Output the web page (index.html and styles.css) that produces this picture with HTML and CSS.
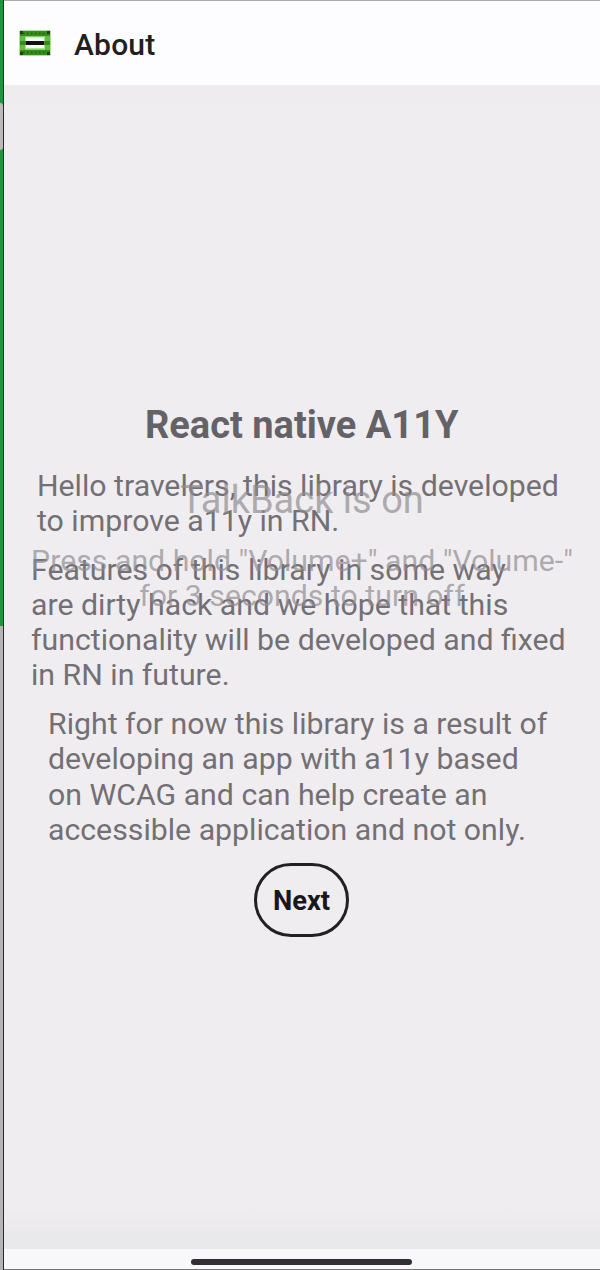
FILE: index.html
```html
<!DOCTYPE html>
<html lang="en">
<head>
<meta charset="utf-8">
<title>About</title>
<link rel="stylesheet" href="styles.css">
</head>
<body>
<div class="frame">
  <div class="edge"><div class="edge-notch"></div><div class="edge-track"></div></div>
  <div class="screen">
    <header class="header">
      <svg class="menu" width="32" height="26" viewBox="0 0 32 26">
        <rect x="0.5" y="0.5" width="31" height="25" fill="#63bd3d"/>
        <rect x="1" y="1" width="30" height="5" fill="#358c1d"/>
        <rect x="1" y="20" width="30" height="5" fill="#358c1d"/>
        <rect x="1" y="11" width="30" height="4" fill="#358c1d"/>
        <rect x="6" y="6.5" width="20" height="13" fill="#a5e58c"/>
        <rect x="7" y="7.5" width="18" height="10.5" fill="#f6fcf4"/>
        <rect x="6.5" y="11" width="19" height="4" fill="#101210"/>
        <path d="M4 3.5H28M4 22.5H28" stroke="#205f12" stroke-width="1.5" stroke-dasharray="1.5 2.5"/>
        <path d="M1 1h3v3H1zM28 1h3v3h-3zM1 22h3v3H1zM28 22h3v3h-3z" fill="#20401b"/>
      </svg>
      <h1 class="title">About</h1>
    </header>
    <main class="content">
      <h2 class="heading">React native A11Y</h2>
      <p class="para intro">Hello travelers, this library is developed<br>to improve a11y in RN.</p>
      <p class="para features">Features of this library in some way<br>are dirty hack and we hope that this<br>functionality will be developed and fixed<br>in RN in future.</p>
      <p class="para result">Right for now this library is a result of<br>developing an app with a11y based<br>on WCAG and can help create an<br>accessible application and not only.</p>
      <button class="next">Next</button>
    </main>
    <footer class="navbar"><div class="handle"></div></footer>
    <div class="toast">
      <div class="toast-title">TalkBack is on</div>
      <div class="toast-text">Press and hold "Volume+" and "Volume-"<br>for 3 seconds to turn off</div>
    </div>
  </div>
</div>
</body>
</html>
```
FILE: styles.css
```css
* { box-sizing: border-box; }
body { margin: 0; font-family: Roboto, sans-serif; background: #f0edf0; }
.frame { display: flex; width: 600px; height: 1270px; overflow: hidden; }
.edge { width: 4px; flex: none; background: #26923c; border-right: 1px solid #252b28; display: flex; flex-direction: column; }
.edge-notch { height: 47px; margin-top: 103px; background: #bcb9b9; border-radius: 0 3px 3px 0; }
.edge-track { flex: 1; margin-top: 476px; background: #b5b3b3; }
.screen { position: relative; flex: 1; display: flex; flex-direction: column; background: #f0edf0; border-top: 1px solid #aaa8aa; border-bottom: 1px solid #777579; }
.header { height: 84px; flex: none; display: flex; align-items: center; gap: 23px; padding: 0 0 0 15px; background: #fdfcfe; }
.menu { display: block; flex: none; }
.title { margin: 3px 0 0; font-size: 30px; font-weight: 500; line-height: 34px; letter-spacing: 0.2px; color: #201f22; }
.content { flex: 1; display: flex; flex-direction: column; align-items: flex-start; padding-top: 317px; background: linear-gradient(#edebee, #f0edf0 20px, #f0edf0 1125px, #e9e8ea 1150px); }
.heading { margin: 0 0 0 141px; font-size: 38px; font-weight: 700; line-height: 46px; white-space: nowrap; color: #656267; }
.para { margin: 0; font-size: 30.25px; line-height: 35.3px; white-space: nowrap; color: #737075; }
.intro { margin: 20px 0 0 33px; }
.features { margin: 13px 0 0 27px; }
.result { margin: 13.4px 0 0 44px; }
.next { width: 95px; height: 74px; margin: 15.6px 0 0 250px; padding: 3px 0 0; border: 3px solid #222024; border-radius: 37px; background: transparent; font: 700 27.3px/32px Roboto, sans-serif; color: #19171b; }
.navbar { height: 20px; flex: none; padding: 10px 0 0 187px; background: #f8f7fa; }
.handle { width: 221px; height: 6px; border-radius: 3px; background: #302e32; }
.toast { position: absolute; top: 477px; left: 0; width: 596px; text-align: center; white-space: nowrap; color: rgba(143, 140, 145, 0.7); }
.toast-title { font-size: 38px; line-height: 44px; }
.toast-text { margin-top: 21px; font-size: 30.25px; line-height: 35.3px; }
```
